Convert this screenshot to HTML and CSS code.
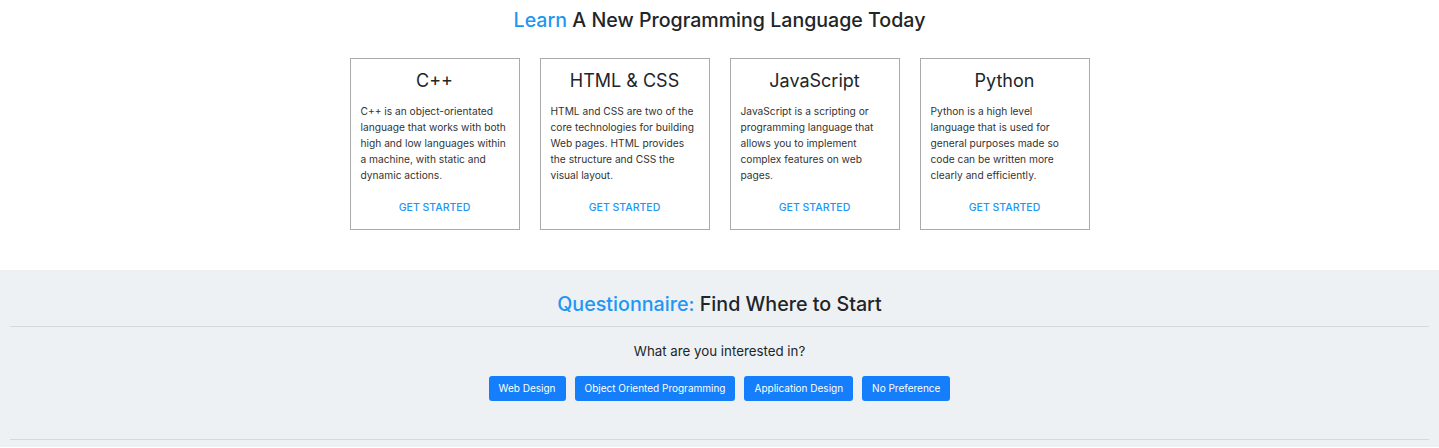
FILE: index.html
```html
<!DOCTYPE html>
<html lang="en">
<head>
<meta charset="utf-8">
<title>Learn</title>
<link rel="stylesheet" href="styles.css">
</head>
<body>
<section class="learn">
  <h2 class="section-title"><span class="accent">Learn</span> A New Programming Language Today</h2>
  <div class="cards">
    <div class="card">
      <h3 class="card-title">C++</h3>
      <p class="card-text">C++ is an object-orientated language that works with both high and low languages within a machine, with static and dynamic actions.</p>
      <a class="card-link" href="#">Get Started</a>
    </div>
    <div class="card">
      <h3 class="card-title">HTML &amp; CSS</h3>
      <p class="card-text">HTML and CSS are two of the core technologies for building Web pages. HTML provides the structure and CSS the visual layout.</p>
      <a class="card-link" href="#">Get Started</a>
    </div>
    <div class="card">
      <h3 class="card-title">JavaScript</h3>
      <p class="card-text">JavaScript is a scripting or programming language that allows you to implement complex features on web pages.</p>
      <a class="card-link" href="#">Get Started</a>
    </div>
    <div class="card">
      <h3 class="card-title">Python</h3>
      <p class="card-text">Python is a high level language that is used for general purposes made so code can be written more clearly and efficiently.</p>
      <a class="card-link" href="#">Get Started</a>
    </div>
  </div>
</section>
<section class="quiz">
  <h2 class="quiz-title"><span class="accent">Questionnaire:</span> Find Where to Start</h2>
  <hr class="rule">
  <p class="question">What are you interested in?</p>
  <div class="choices">
    <button class="choice">Web Design</button>
    <button class="choice">Object Oriented Programming</button>
    <button class="choice">Application Design</button>
    <button class="choice">No Preference</button>
  </div>
  <hr class="rule rule-bottom">
</section>
</body>
</html>
```

FILE: styles.css
```css
* { box-sizing: border-box; }
html, body { margin: 0; padding: 0; }
body {
  font-family: Inter, "Noto Sans", "Liberation Sans", sans-serif;
  color: #212529;
  background: #fff;
}
.accent { color: #2196f3; }
.learn {
  padding-top: 7px;
  padding-bottom: 40px;
}
.section-title {
  margin: 0;
  text-align: center;
  font-size: 19.6px;
  font-weight: 500;
  line-height: 26px;
}
.cards {
  display: flex;
  justify-content: center;
  gap: 20px;
  margin-top: 25px;
}
.card {
  width: 170px;
  height: 172px;
  border: 1px solid #aaa;
  padding: 11px 10px 0;
  display: flex;
  flex-direction: column;
}
.card-title {
  margin: 0;
  text-align: center;
  font-size: 18px;
  font-weight: 400;
  line-height: 22px;
}
.card-text {
  margin: 11px 0 0;
  font-size: 10.2px;
  line-height: 16px;
  color: #333;
}
.card-link {
  margin-top: auto;
  margin-bottom: 13px;
  text-align: center;
  font-size: 10.5px;
  line-height: 16px;
  font-weight: 500;
  text-transform: uppercase;
  color: #2196f3;
  text-decoration: none;
}
.quiz {
  background: #eef1f4;
  padding: 21px 10px 7px;
}
.quiz-title {
  margin: 0;
  text-align: center;
  font-size: 19.7px;
  font-weight: 500;
  line-height: 26px;
}
.rule {
  border: 0;
  border-top: 1px solid #d5d8dc;
  margin: 9px 0 0;
}
.question {
  margin: 15px 0 0;
  text-align: center;
  font-size: 13.3px;
  line-height: 18px;
}
.choices {
  display: flex;
  justify-content: center;
  gap: 9px;
  margin-top: 16px;
}
.choice {
  font-family: inherit;
  font-size: 10px;
  line-height: 15px;
  height: 25px;
  padding: 0 10px;
  border: 0;
  border-radius: 3px;
  background: #147efb;
  color: #fff;
}
.rule-bottom { margin-top: 38px; }
```
